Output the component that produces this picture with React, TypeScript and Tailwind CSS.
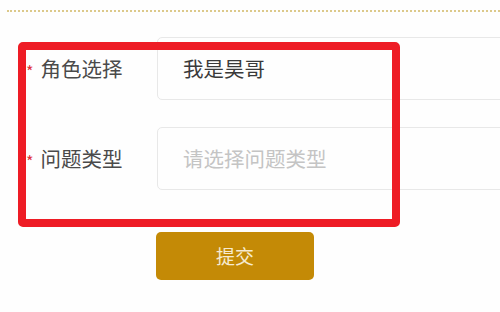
import React from "react";

const font = { fontFamily: '"Noto Sans CJK SC", "Noto Sans", sans-serif' };

function Row({
  label,
  value,
  placeholder,
  className = "",
}: {
  label: string;
  value?: string;
  placeholder?: string;
  className?: string;
}) {
  return (
    <div className={`flex items-center h-[63px] ${className}`}>
      <div className="w-[157px] shrink-0 flex items-center pl-[26px]">
        <span className="text-[16px] text-[#e0323a] leading-none mr-[7px] mt-[5px]">*</span>
        <span className="text-[20.5px] text-[#4a4a4a] leading-none">{label}</span>
      </div>
      <div className="w-[380px] shrink-0 h-[63px] border border-[#e8e8e8] rounded-[5px] flex items-center pl-[25px]">
        {value ? (
          <span className="text-[20.5px] text-[#3a3a3a] leading-none">{value}</span>
        ) : (
          <span className="text-[20.5px] text-[#c4c4c4] leading-none">{placeholder}</span>
        )}
      </div>
    </div>
  );
}

export default function App() {
  return (
    <div className="relative w-[500px] h-[312px] bg-[#fefefe] overflow-hidden" style={font}>
      {/* dotted divider */}
      <div className="ml-[7px] mt-[10px] border-t-2 border-dotted border-[#dcc98a]" />

      <div className="flex flex-col">
        <Row className="mt-[25px]" label="角色选择" value="我是昊哥" />
        <Row className="mt-[27px]" label="问题类型" placeholder="请选择问题类型" />
        <button
          type="button"
          className="ml-[156px] mt-[42px] w-[158px] h-[48px] bg-[#c48a06] rounded-[5px] text-[19px] text-[#f6ead0] flex items-center justify-center"
        >
          提交
        </button>
      </div>

      {/* red annotation box */}
      <div className="absolute left-[18px] top-[42px] w-[382px] h-[185px] border-[8px] border-[#ee1c25] rounded-[5px] pointer-events-none" />
    </div>
  );
}
